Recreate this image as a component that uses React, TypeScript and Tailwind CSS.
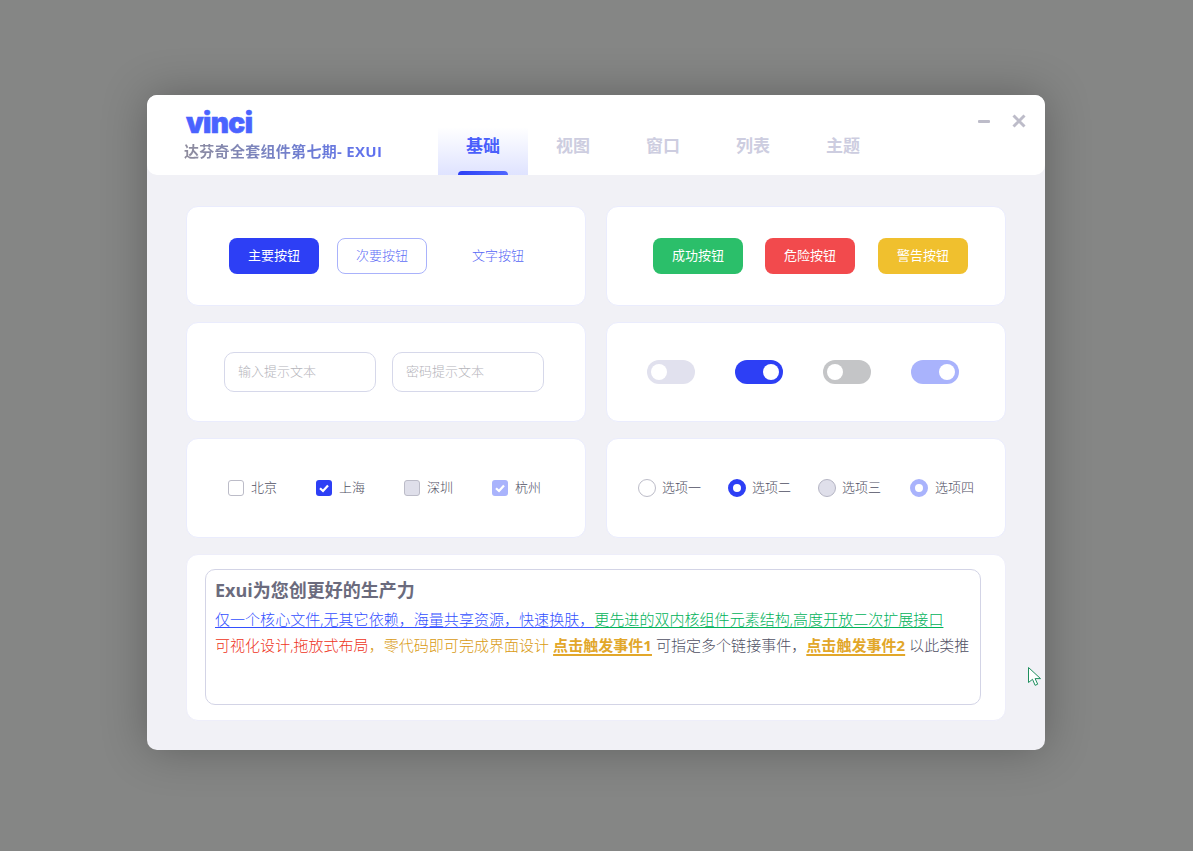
const cjk = 'font-["Open_Sans","Noto_Sans_CJK_SC",sans-serif]'

const tabs = ['基础', '视图', '窗口', '列表', '主题']

function Card({ className, children }: { className: string; children: React.ReactNode }) {
  return (
    <div className={`flex items-center rounded-xl border border-[#eaecfd] bg-white ${className}`}>{children}</div>
  )
}

function Btn({ label, className }: { label: string; className: string }) {
  return (
    <button type="button" className={`h-9 w-[90px] shrink-0 rounded-lg text-[13px] ${className}`}>
      {label}
    </button>
  )
}

function Switch({ on, track }: { on?: boolean; track: string }) {
  return (
    <div className={`flex h-6 w-12 items-center rounded-full px-1 ${on ? 'justify-end' : ''} ${track}`}>
      <div className="h-4 w-4 rounded-full bg-white" />
    </div>
  )
}

function Check({ label, box, tick }: { label: string; box: string; tick?: boolean }) {
  return (
    <div className="flex w-[88px] shrink-0 items-center gap-[7px] text-[13px] font-light text-[#4f4f63]">
      <div className={`flex h-4 w-4 items-center justify-center rounded-[3px] ${box}`}>
        {tick ? (
          <svg viewBox="0 0 16 16" className="h-4 w-4" fill="none" stroke="#fff" strokeWidth="2.2">
            <path d="M4 8.2 7 11l5-5.6" />
          </svg>
        ) : null}
      </div>
      {label}
    </div>
  )
}

function Radio({ label, dot, width }: { label: string; dot: string; width: string }) {
  return (
    <div className={`flex shrink-0 items-center gap-[6px] text-[13px] font-light text-[#4f4f63] ${width}`}>
      <div className={`h-[18px] w-[18px] rounded-full ${dot}`} />
      {label}
    </div>
  )
}

export default function App() {
  return (
    <div className={`h-[851px] overflow-hidden bg-[#858685] pt-[95px] pl-[147px] ${cjk}`}>
      <div className="relative h-[655px] w-[898px] rounded-[10px] bg-[#f1f1f6] shadow-[0_0_45px_rgba(0,0,0,0.28)]">
        <header className="flex h-20 rounded-[10px] bg-white">
          <div className="w-[291px] shrink-0 pl-[37px]">
            <div className='mt-[15px] h-[27px] pl-[2px] font-["Inter",sans-serif] text-[28px] leading-[27px] font-black tracking-[-0.6px] text-[#4a63ff] [-webkit-text-stroke:0.6px_#4a63ff]'>
              vinci
            </div>
            <div className="mt-[4px] w-fit bg-linear-to-r from-[#8f8c9c] to-[#5d6ef2] bg-clip-text text-[15px] leading-5 font-bold tracking-[0.3px] text-transparent">
              达芬奇全套组件第七期- EXUI
            </div>
          </div>
          <nav className="mt-8 flex h-12">
            {tabs.map((tab, i) => (
              <div
                key={tab}
                className={`relative flex w-[90px] justify-center pt-[7px] text-[17px] leading-6 font-bold ${
                  i === 0 ? 'bg-linear-to-b from-white to-[#dfe3ff] text-[#4a5ffb]' : 'text-[#cdcde0]'
                }`}
              >
                {tab}
                {i === 0 ? (
                  <span className="absolute bottom-0 left-5 h-1 w-[50px] rounded-t-sm bg-linear-to-r from-[#2d3ff5] to-[#4f66ff]" />
                ) : null}
              </div>
            ))}
          </nav>
          <div className="ml-auto flex h-[30px] items-center gap-[22px] pt-[22px] pr-[19px]">
            <svg viewBox="0 0 12 3" className="h-[3px] w-3" fill="#bdbcc9">
              <rect width="12" height="3" rx="1" />
            </svg>
            <svg viewBox="0 0 14 14" className="h-[14px] w-[14px]" fill="none" stroke="#bdbcc9" strokeWidth="3">
              <path d="M1.5 1.5l11 11M12.5 1.5l-11 11" />
            </svg>
          </div>
        </header>

        <main className="grid grid-cols-2 gap-x-5 gap-y-4 px-[39px] pt-[31px]">
          <Card className="h-[100px] pl-[42px]">
            <Btn label="主要按钮" className="bg-[#2d3ff5] text-white" />
            <Btn label="次要按钮" className="ml-[18px] border-[1.5px] border-[#a9b2fb] font-light text-[#5f6ff6]" />
            <Btn label="文字按钮" className="ml-[26px] font-light text-[#5566f5]" />
          </Card>
          <Card className="h-[100px] pl-[46px]">
            <Btn label="成功按钮" className="bg-[#2bbf6a] text-white" />
            <Btn label="危险按钮" className="ml-[22px] bg-[#f24a4d] text-white" />
            <Btn label="警告按钮" className="ml-[23px] bg-[#f0c02e] text-white" />
          </Card>

          <Card className="h-[100px] gap-4 pl-[37px]">
            <input
              placeholder="输入提示文本"
              className="h-10 w-[152px] rounded-[10px] border-[1.5px] border-[#d6d8ea] px-[13px] pb-[2px] text-[13px] font-light outline-none placeholder:text-[#b4b4ba]"
            />
            <input
              placeholder="密码提示文本"
              className="h-10 w-[152px] rounded-[10px] border-[1.5px] border-[#d6d8ea] px-[13px] pb-[2px] text-[13px] font-light outline-none placeholder:text-[#b4b4ba]"
            />
          </Card>
          <Card className="h-[100px] gap-10 pl-10">
            <Switch track="bg-[#e1e1ee]" />
            <Switch on track="bg-[#2d3ff5]" />
            <Switch track="bg-[#c4c5c7]" />
            <Switch on track="bg-[#a9b3fc]" />
          </Card>

          <Card className="h-[100px] pl-[41px]">
            <Check label="北京" box="border border-[#bcbcc8] bg-white" />
            <Check label="上海" box="bg-[#2d3ff5]" tick />
            <Check label="深圳" box="border border-[#bcbcc8] bg-[#dfdfea]" />
            <Check label="杭州" box="bg-[#a9b3fc]" tick />
          </Card>
          <Card className="h-[100px] pl-[31px]">
            <Radio label="选项一" width="w-[90px]" dot="border border-[#bcbcc8] bg-white" />
            <Radio label="选项二" width="w-[90px]" dot="border-[5px] border-[#2d3ff5] bg-white" />
            <Radio label="选项三" width="w-[92px]" dot="border border-[#b5b5c4] bg-[#dfdfea]" />
            <Radio label="选项四" width="w-[90px] gap-[7px]" dot="border-[5px] border-[#a9b3fc] bg-white" />
          </Card>

          <div className="col-span-2 h-[167px] rounded-xl border border-[#eeeefa] bg-white px-[18px] pt-[14px]">
            <div className="h-[136px] w-[776px] rounded-[10px] border-[1.5px] border-[#d3d4e6] px-[9px] pt-[6px]">
              <h2 className="text-[18px] leading-7 font-bold text-[#6b6b7d]">Exui为您创更好的生产力</h2>
              <p className="mt-[2px] text-[15px] leading-[26px] font-light tracking-[0.04px] whitespace-nowrap">
                <span className="text-[#3350ff] underline decoration-1 underline-offset-[2px] [text-decoration-skip-ink:none]">仅一个核心文件,无其它依赖，海量共享资源，快速换肤，</span>
                <span className="text-[#00b25a] underline decoration-1 underline-offset-[2px] [text-decoration-skip-ink:none]">更先进的双内核组件元素结构,高度开放二次扩展接口</span>
              </p>
              <p className="text-[15px] leading-[26px] font-light tracking-[0.04px] whitespace-nowrap text-[#4f4f63]">
                <span className="text-[#ee3322]">可视化设计,拖放式布局</span>
                <span className="text-[#d99a12]">，零代码即可完成界面设计 </span>
                <span className="font-bold text-[#e2a72a] underline decoration-2 underline-offset-[3px] [text-decoration-skip-ink:none]">点击触发事件1</span> 可指定多个链接事件，
                <span className="font-bold text-[#e2a72a] underline decoration-2 underline-offset-[3px] [text-decoration-skip-ink:none]">点击触发事件2</span> 以此类推
              </p>
            </div>
          </div>
        </main>

        {/* mouse pointer caught in the screenshot */}
        <svg viewBox="0 0 14 20" className="absolute top-[572px] left-[881px] h-5 w-[14px]" fill="#fff" stroke="#1f8f5f" strokeWidth="1">
          <path d="M.5.5v15l4-3.2 2.6 6 2.6-1.1-2.6-5.6h5.4z" />
        </svg>
      </div>
    </div>
  )
}
